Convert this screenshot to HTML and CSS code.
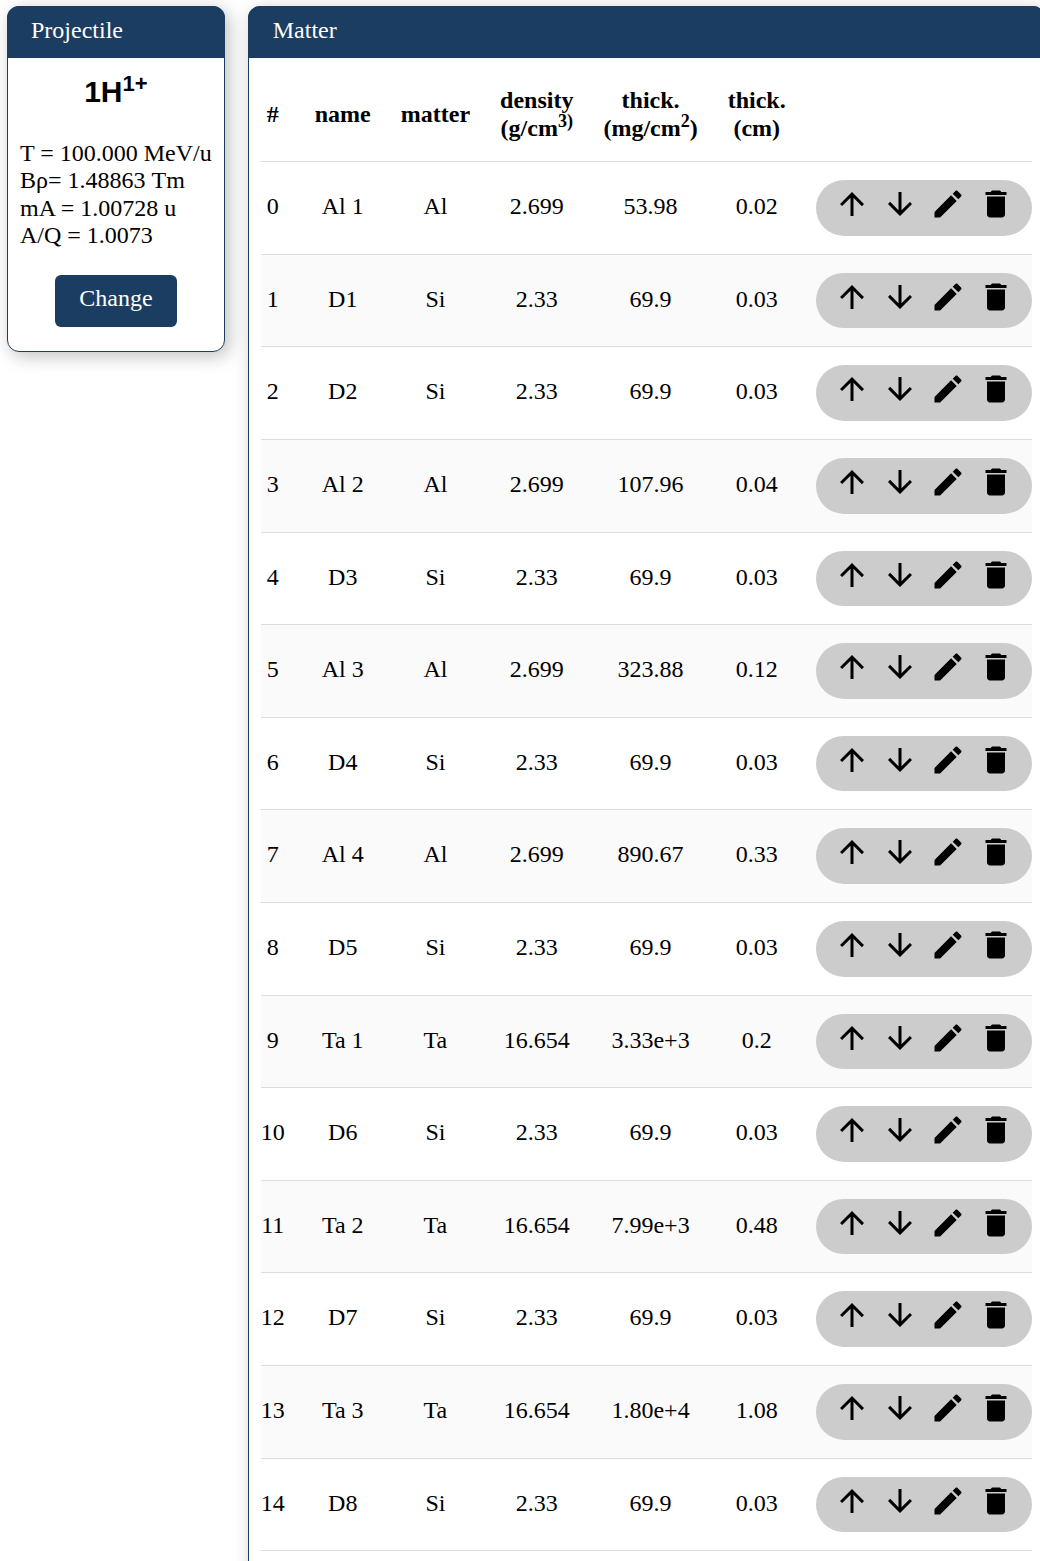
FILE: index.html
```html
<!DOCTYPE html>
<html lang="en">
<head>
<meta charset="utf-8">
<meta name="viewport" content="width=device-width, initial-scale=1">
<title>Projectile and matter</title>
<link rel="stylesheet" href="styles.css">
</head>
<body>
<svg class="sprite" aria-hidden="true">
  <symbol id="up" viewBox="0 0 24 24"><path d="M4 12l1.41 1.41L11 7.83V20h2V7.83l5.58 5.59L20 12l-8-8-8 8z"/></symbol>
  <symbol id="down" viewBox="0 0 24 24"><path d="M20 12l-1.41-1.41L13 16.17V4h-2v12.17l-5.58-5.59L4 12l8 8 8-8z"/></symbol>
  <symbol id="edit" viewBox="0 0 24 24"><path d="M3 17.25V21h3.75L17.81 9.94l-3.75-3.75L3 17.25zM20.71 7.04c.39-.39.39-1.02 0-1.41l-2.34-2.34c-.39-.39-1.02-.39-1.41 0l-1.83 1.83 3.75 3.75 1.83-1.83z"/></symbol>
  <symbol id="delete" viewBox="0 0 24 24"><path d="M6 19c0 1.1.9 2 2 2h8c1.1 0 2-.9 2-2V7H6v12zM19 4h-3.5c-.4-.7-.9-1-1.7-1h-3.6c-.8 0-1.300.3-1.700 1H5v2h14V4z"/></symbol>
</svg>
<main class="layout">
  <section class="card">
    <h2 class="card-title">Projectile</h2>
    <div class="card-body">
      <h3 class="ion">1H<sup>1+</sup></h3>
      <p class="facts">T = 100.000 MeV/u<br>Bρ= 1.48863 Tm<br>mA = 1.00728 u<br>A/Q = 1.0073</p>
      <button class="change" type="button">Change</button>
    </div>
  </section>
  <section class="card matter">
    <h2 class="card-title">Matter</h2>
    <div class="card-body">
      <table class="layers">
        <thead>
          <tr><th>#</th><th>name</th><th>matter</th><th>density<br>(g/cm<sup>3)</sup></th><th>thick.<br>(mg/cm<sup>2</sup>)</th><th>thick.<br>(cm)</th><td></td></tr>
        </thead>
        <tbody id="rows"></tbody>
      </table>
    </div>
  </section>
</main>
<script src="script.js"></script>
</body>
</html>
```
FILE: styles.css
```css
* { box-sizing: border-box; }

body {
  margin: 0;
  padding: 6px 7px;
  background: #fff;
  color: #000;
  font-family: "Liberation Serif", "Times New Roman", serif;
  font-size: 24px;
  line-height: 1.15;
}

.sprite { display: none; }

.layout {
  display: flex;
  align-items: flex-start;
  gap: 23px;
}

.card {
  flex: none;
  border: 1px solid #1c3d62;
  border-radius: 12px;
  background: #fff;
  box-shadow: 4px 4px 18px rgba(0, 0, 0, 0.25);
  white-space: nowrap;
}

.matter { flex: 1 0 auto; padding-bottom: 24px; }

.card-title {
  margin: -1px -1px 0;
  padding: 0 24px;
  border-radius: 12px 12px 0 0;
  background: #1c3d62;
  color: #fff;
  font-size: 24px;
  font-weight: 400;
  line-height: 48px;
  height: 52px;
}

.matter .card-title { padding: 0 25px; }

.card-body { padding: 12px; }

sup {
  font-size: 18px;
  line-height: 0;
}

.ion {
  margin: 5px 0 30px;
  font-family: "Liberation Sans", Arial, sans-serif;
  font-size: 30px;
  text-align: center;
}

.ion sup { font-size: 22px; }

.facts { margin: 0 0 25px; }

.change {
  display: block;
  margin: 0 auto 12px;
  padding: 0 24px 4px;
  height: 52px;
  border: 0;
  border-radius: 6px;
  background: #1c3d62;
  color: #fff;
  font: inherit;
}

.layers {
  width: 100%;
  border-spacing: 0;
  text-align: center;
}

.layers th,
.layers td {
  padding: 17px 15px 19px;
  border-bottom: 1px solid #ddd;
  vertical-align: middle;
}

.layers tr > :first-child { padding-left: 0; }

.layers tr > :last-child {
  width: 1px;
  padding: 18px 0 18px 15px;
}

.layers tbody tr:nth-child(even) { background: #fafafa; }

.actions {
  display: flex;
  gap: 12px;
  height: calc(1lh + 28px);
  padding: 6px 18px 0;
  border-radius: 28px;
  background: #ccc;
}

.actions button {
  width: 36px;
  height: 36px;
  padding: 0;
  border: 0;
  background: none;
}

.actions svg {
  display: block;
  width: 36px;
  height: 36px;
}
```
FILE: script.js
```js
const layers = [
  ["Al 1", "Al", "2.699", "53.98", "0.02"],
  ["D1", "Si", "2.33", "69.9", "0.03"],
  ["D2", "Si", "2.33", "69.9", "0.03"],
  ["Al 2", "Al", "2.699", "107.96", "0.04"],
  ["D3", "Si", "2.33", "69.9", "0.03"],
  ["Al 3", "Al", "2.699", "323.88", "0.12"],
  ["D4", "Si", "2.33", "69.9", "0.03"],
  ["Al 4", "Al", "2.699", "890.67", "0.33"],
  ["D5", "Si", "2.33", "69.9", "0.03"],
  ["Ta 1", "Ta", "16.654", "3.33e+3", "0.2"],
  ["D6", "Si", "2.33", "69.9", "0.03"],
  ["Ta 2", "Ta", "16.654", "7.99e+3", "0.48"],
  ["D7", "Si", "2.33", "69.9", "0.03"],
  ["Ta 3", "Ta", "16.654", "1.80e+4", "1.08"],
  ["D8", "Si", "2.33", "69.9", "0.03"],
];

const actions = [
  ["up", "Move up"],
  ["down", "Move down"],
  ["edit", "Edit"],
  ["delete", "Delete"],
];

const buttons = actions
  .map(([icon, label]) => `<button type="button" aria-label="${label}"><svg aria-hidden="true"><use href="#${icon}"/></svg></button>`)
  .join("");

document.getElementById("rows").innerHTML = layers
  .map((cells, i) => `<tr>${[i, ...cells].map((c) => `<td>${c}</td>`).join("")}<td><div class="actions">${buttons}</div></td></tr>`)
  .join("");
```
